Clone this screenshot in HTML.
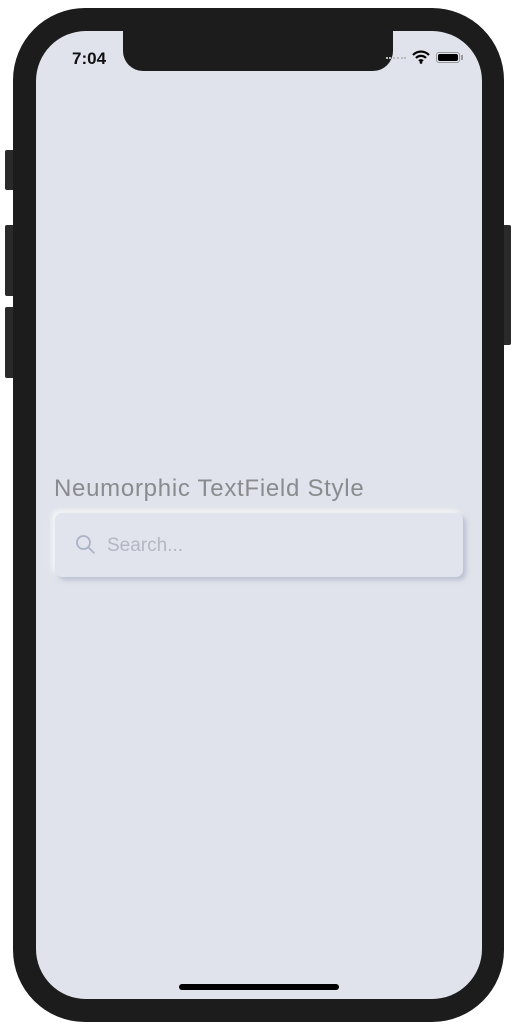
<!DOCTYPE html>
<html><head><style>
body{margin:0;width:517px;height:1024px;background:#fff;position:relative;overflow:hidden;font-family:"Liberation Sans",sans-serif}
.b{position:absolute;background:#2a2a2a;border-radius:2px}
.phone{position:absolute;left:13px;top:8px;width:491px;height:1014px;background:#1c1c1c;border-radius:72px}
.screen{position:absolute;left:36px;top:31px;width:446px;height:968px;background:#e0e3eb;border-radius:50px;overflow:hidden}
.notch{position:absolute;left:87px;top:0;width:270px;height:40px;background:#1c1c1c;border-radius:0 0 20px 20px}
.time{position:absolute;left:36px;top:18px;font-size:17px;font-weight:bold;color:#111}
.title{position:absolute;left:18px;top:444px;font-size:24px;color:#8a8b8e;letter-spacing:0.72px}
.field{position:absolute;left:19px;top:482px;width:408px;height:64px;border-radius:7px;background:#e1e4ec;box-shadow:3px 3px 5px rgba(160,170,195,.6),-3px -3px 6px rgba(255,255,255,.7)}
.ph{position:absolute;left:52px;top:22px;font-size:19px;color:#b3b7c2}
.home{position:absolute;left:143px;top:953px;width:160px;height:6px;background:#000;border-radius:3px}
</style></head><body>
<div class="b" style="left:5px;top:150px;width:10px;height:40px"></div>
<div class="b" style="left:5px;top:225px;width:10px;height:71px"></div>
<div class="b" style="left:5px;top:307px;width:10px;height:71px"></div>
<div class="b" style="left:502px;top:225px;width:9px;height:120px"></div>
<div class="phone"></div>
<div class="screen">
<div class="notch"></div>
<div class="time">7:04</div>
<div style="position:absolute;left:350px;top:26px;width:20px;height:2px;border-top:2px dotted #bbb"></div>
<svg style="position:absolute;left:376px;top:19px" width="18" height="14" viewBox="0 0 18 14"><path d="M1 5a11 11 0 0 1 16 0M4 8a7 7 0 0 1 10 0M7 11a3 3 0 0 1 4 0" stroke="#000" stroke-width="2.2" fill="none"/><circle cx="9" cy="12.5" r="1.3"/></svg>
<div style="position:absolute;left:400px;top:21px;width:24px;height:11px;border:1px solid #999;border-radius:3px;box-sizing:border-box;padding:1px"><div style="background:#000;width:100%;height:100%;border-radius:2px"></div></div>
<div style="position:absolute;left:425px;top:24px;width:2px;height:5px;background:#999"></div>
<div class="title">Neumorphic TextField Style</div>
<div class="field">
<svg style="position:absolute;left:20px;top:21px" width="21" height="21" viewBox="0 0 21 21"><circle cx="8.5" cy="8.5" r="6.5" stroke="#a9b2c6" stroke-width="1.8" fill="none"/><path d="M13.3 13.3l5.5 5.5" stroke="#a9b2c6" stroke-width="1.8" stroke-linecap="round"/></svg>
<div class="ph">Search...</div>
</div>
<div class="home"></div>
</div>
</body></html>
